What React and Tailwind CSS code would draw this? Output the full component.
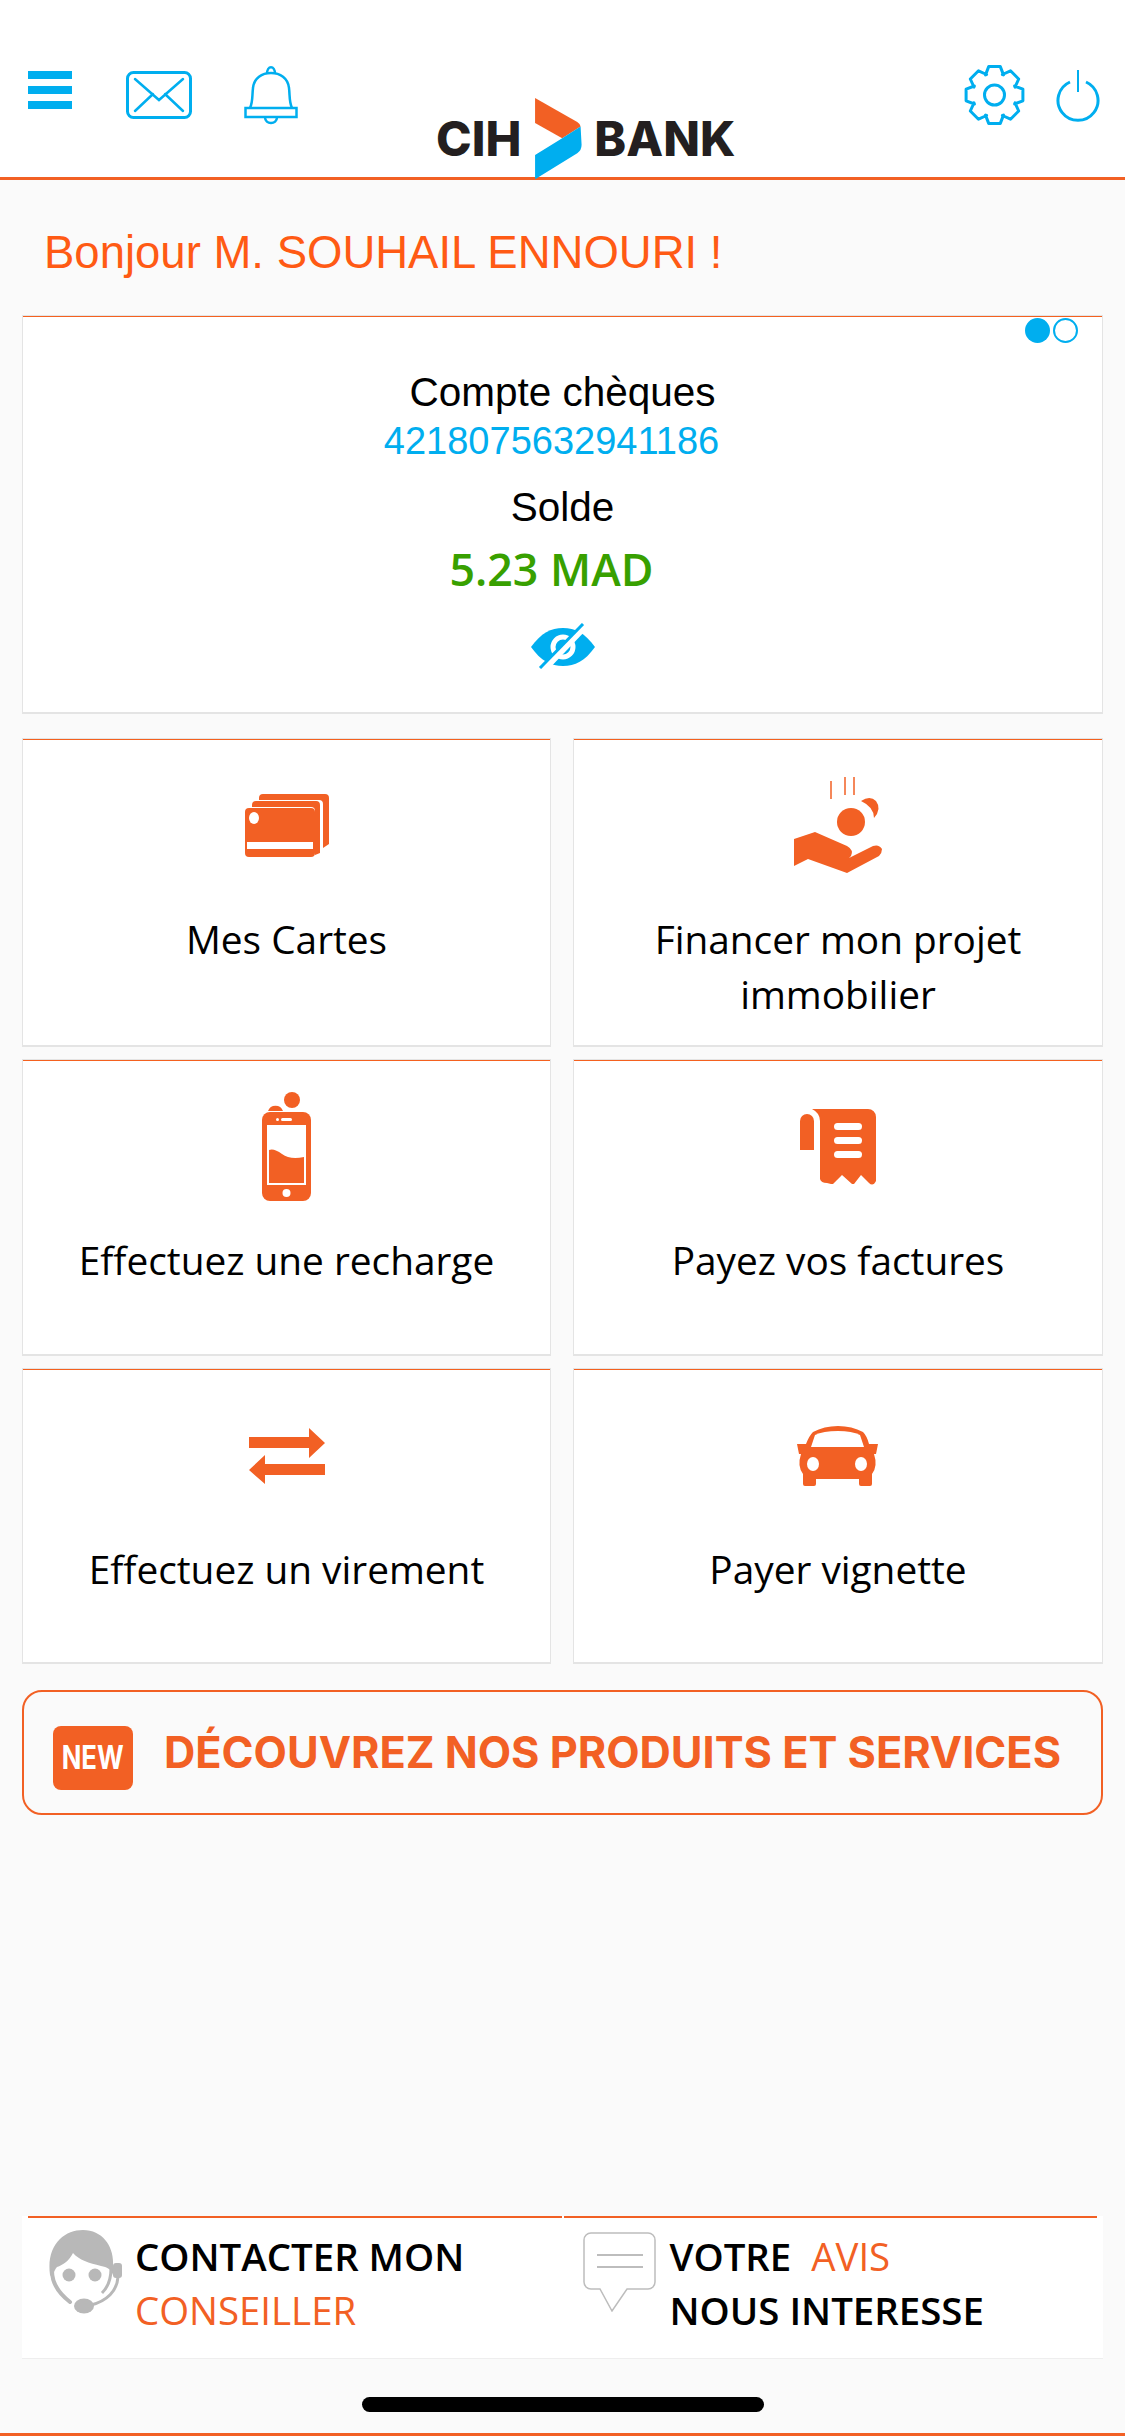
import React from "react";

const ORANGE = "#f26024";
const BLUE = "#00aeef";

// 8 teeth gear outline
const gearPath = () => {
  const pts = [];
  for (let i = 0; i < 8; i++) {
    const a = (i * Math.PI) / 4 - Math.PI / 2;
    const p = (r, d) => [
      30.5 + r * Math.cos(a + d),
      30 + r * Math.sin(a + d),
    ];
    pts.push(p(22, -0.42), p(29, -0.2), p(29, 0.2), p(22, 0.42));
  }
  return "M" + pts.map((p) => p[0].toFixed(1) + " " + p[1].toFixed(1)).join("L") + "Z";
};

const Menu = () => (
  <div className="flex flex-col gap-[7px] w-[44px] mt-[6px]">
    <div className="h-[8px] bg-[#00aeef]" />
    <div className="h-[8px] bg-[#00aeef]" />
    <div className="h-[8px] bg-[#00aeef]" />
  </div>
);

const Mail = () => (
  <svg width="66" height="48" viewBox="0 0 66 48" fill="none" stroke={BLUE} strokeWidth="3" className="mt-[6px]">
    <rect x="1.5" y="1.5" width="63" height="45" rx="6" />
    <path d="M9 8l24 21 24-21M9 40l18-17M57 40L39 23" strokeWidth="2.5" strokeLinecap="round" />
  </svg>
);

const Bell = () => (
  <svg width="54" height="60" viewBox="0 0 54 60" fill="none" stroke={BLUE} strokeWidth="2.5">
    <path d="M23 9c0-9 8-9 8 0" />
    <path d="M6 43c3-6 2-12 3-20 1-10 9-15 18-15s17 5 18 15c1 8 0 14 3 20" />
    <rect x="1.5" y="43" width="51" height="9" />
    <path d="M21 52c0 8 12 8 12 0" />
  </svg>
);

const Gear = () => (
  <svg width="61" height="60" viewBox="0 0 61 60" fill="none" stroke={BLUE} strokeWidth="3" strokeLinejoin="round">
    <path d={gearPath()} />
    <circle cx="30.5" cy="30" r="10" />
  </svg>
);

const Power = () => (
  <svg width="44" height="54" viewBox="0 0 44 54" fill="none" stroke={BLUE} strokeWidth="3">
    <path d="M14 13a20 20 0 1 0 16 0" />
    <path d="M22 1v22" strokeWidth="2" />
  </svg>
);

const Chevron = () => (
  <svg width="47" height="82" viewBox="404 55 140 245" className="ml-[14px] mr-[12px]">
    <path d="M404 55L530 127Q539 133 540 140L485 175L404 130Z" fill={ORANGE} />
    <path d="M540 140L543 195Q543 212 530 220L404 298V225L485 175Z" fill={BLUE} />
  </svg>
);

const EyeOff = () => (
  <svg width="64" height="46" viewBox="0 0 64 46">
    <path d="M0 24C10 10 20 5 32 5s22 5 32 19C54 38 44 43 32 43S10 38 0 24Z" fill={BLUE} />
    <circle cx="32" cy="24" r="10" fill="none" stroke="#fff" strokeWidth="5" />
    <path d="M13 46L53 4" stroke="#fff" strokeWidth="7" />
    <path d="M9 45L52 1" stroke={BLUE} strokeWidth="3" />
  </svg>
);

const CardsIcon = () => (
  <svg width="84" height="63" viewBox="0 0 84 63" fill={ORANGE} stroke="none">
    <path d="M14 4a4 4 0 0 1 4-4h62a4 4 0 0 1 4 4v46l-6 4V10a4 4 0 0 0-4-4H14Z" />
    <path d="M7 11a4 4 0 0 1 4-4h60a4 4 0 0 1 4 4v48l-5 2V17a4 4 0 0 0-4-4H7Z" />
    <rect x="0" y="14" width="70" height="49" rx="4" />
    <ellipse cx="9" cy="24" rx="5" ry="6" fill="#fff" />
    <rect x="2" y="48" width="66" height="7" fill="#fff" />
  </svg>
);

const HandIcon = () => (
  <svg width="88" height="97" viewBox="0 0 88 97" fill={ORANGE}>
    <path d="M37 4v18M51 0v18M60 0v18" stroke={ORANGE} strokeWidth="1.5" />
    <circle cx="57" cy="45" r="14" />
    <path d="M67 24Q76 18 82 24Q88 32 80 41Q80 30 67 24Z" />
    <path d="M0 62L21 55L53 69Q60 73 57 79Q56 80 55 81L79 69Q85 67 88 72Q88 76 85 79L53 96L14 82L0 89Z" />
  </svg>
);

const PhoneIcon = () => (
  <svg width="49" height="109" viewBox="0 0 49 109" fill={ORANGE}>
    <circle cx="30" cy="8" r="8" />
    <path d="M6 19a8 8 0 0 1 15 0Z" />
    <rect x="0" y="20" width="49" height="89" rx="8" />
    <rect x="5" y="33" width="39" height="60" fill="#fff" />
    <path d="M7 58Q12 56 20 62T42 65V91H7Z" />
    <circle cx="24.5" cy="101" r="4" fill="#fff" />
    <rect x="19" y="26" width="11" height="3" rx="1.5" fill="#fff" />
    <rect x="14" y="26" width="3" height="3" rx="1.5" fill="#fff" />
  </svg>
);

const ReceiptIcon = () => (
  <svg width="76" height="76" viewBox="0 0 76 76" fill={ORANGE}>
    <path d="M0 12a7 7 0 0 1 14 0v29H0Z" />
    <path d="M12 0H68a8 8 0 0 1 8 8V72q-3 6-7 2L61 66 54 75h-2L42 66 33 75h-2L27 74Q21 74 20 70V12Q20 4 12 0Z" />
    <rect x="34" y="14" width="28" height="7" rx="3.5" fill="#fff" />
    <rect x="34" y="28" width="28" height="7" rx="3.5" fill="#fff" />
    <rect x="34" y="42" width="28" height="7" rx="3.5" fill="#fff" />
  </svg>
);

const TransferIcon = () => (
  <svg width="76" height="56" viewBox="0 0 76 56" fill={ORANGE}>
    <path d="M0 9H60V0L76 15 60 30V20H0Z" />
    <path d="M76 36H16V27L0 42 16 56V47H76Z" />
  </svg>
);

const CarIcon = () => (
  <svg width="84" height="60" viewBox="0 0 84 60" fill={ORANGE}>
    <path d="M10 18H1l2 10H5Q1 40 7 48V58q0 2 2 2h9q2 0 2-2V53H63V58q0 2 2 2h9q2 0 2-2V48Q82 40 78 28h2l2-10H73Q71 10 67 6 56 0 42 0 28 0 17 6 13 10 10 18Z" />
    <path d="M15 21H68L64 9Q56 5 42 5 27 5 19 9Z" fill="#fff" />
    <ellipse cx="17" cy="38" rx="6" ry="7" fill="#fff" />
    <ellipse cx="65" cy="38" rx="6" ry="7" fill="#fff" />
  </svg>
);

const AgentIcon = () => (
  <svg width="75" height="84" viewBox="8 5 75 84" fill="#b8b8b8">
    <path d="M11 50C7 20 25 5 44 5C64 5 75 22 74 40V50C72 44 68 42 62 41C50 38 40 35 34 28C30 36 24 40 18 42C16 44 15 47 13 52Z" />
    <path d="M13 46C13 60 22 70 31 77" fill="none" stroke="#b8b8b8" strokeWidth="4" strokeLinecap="round" />
    <path d="M72 44C72 54 69 62 63 68" fill="none" stroke="#b8b8b8" strokeWidth="3" />
    <circle cx="30" cy="50" r="6.5" />
    <circle cx="56" cy="50" r="6.5" />
    <rect x="74" y="38" width="9" height="15" rx="3" />
    <path d="M79 52C78 66 68 76 52 80" fill="none" stroke="#b8b8b8" strokeWidth="3" />
    <ellipse cx="45" cy="81" rx="10" ry="7.5" />
  </svg>
);

const BubbleIcon = () => (
  <svg width="73" height="80" viewBox="0 0 73 80" fill="#fff" stroke="#bdbdbd" strokeWidth="1.5">
    <path d="M8 1H65a7 7 0 0 1 7 7V50a7 7 0 0 1-7 7H44L29 79 17 57H8a7 7 0 0 1-7-7V8a7 7 0 0 1 7-7Z" />
    <path d="M14 23H60M14 35H60" strokeWidth="2" />
  </svg>
);

const tiles = [
  { label: "Mes Cartes", icon: <CardsIcon /> },
  { label: "Financer mon projet immobilier", icon: <HandIcon /> },
  { label: "Effectuez une recharge", icon: <PhoneIcon /> },
  { label: "Payez vos factures", icon: <ReceiptIcon /> },
  { label: "Effectuez un virement", icon: <TransferIcon /> },
  { label: "Payer vignette", icon: <CarIcon /> },
];

export default function App() {
  return (
    <div className="w-[1125px] h-[2436px] bg-[#fafafa] flex flex-col overflow-hidden font-['Open_Sans',sans-serif]">
      <header className="h-[180px] shrink-0 bg-white border-b-[3px] border-[#f26024] flex pl-[28px] pr-[25px] pt-[65px] relative">
        <div className="flex items-start gap-[54px] w-[270px]">
          <Menu />
          <Mail />
          <div className="-ml-[2px]"><Bell /></div>
        </div>
        <div className="flex items-center ml-[138px] h-[82px] mt-[33px] -mb-[3px] z-10">
          <span className="font-['Inter',sans-serif] font-extrabold text-[48px] leading-none text-[#231f20]">CIH</span>
          <Chevron />
          <span className="font-['Inter',sans-serif] font-extrabold text-[48px] leading-none text-[#231f20]">BANK</span>
        </div>
        <div className="ml-auto flex items-start gap-[31px]">
          <Gear />
          <div className="mt-[4px]"><Power /></div>
        </div>
      </header>

      <div className="h-[135px] shrink-0 pl-[44px] pt-[48px] font-['Liberation_Sans',sans-serif] text-[45.5px] leading-[50px] text-[#ff5a14]">
        Bonjour M. SOUHAIL ENNOURI !
      </div>

      <section className="mx-[22px] h-[399px] shrink-0 bg-white border border-[#e4e4e4] border-b-2 shadow-[inset_0_1px_0_#f4611f] flex flex-col items-center relative">
        <div className="absolute right-[24px] top-[2px] flex gap-[3px]">
          <div className="w-[25px] h-[25px] rounded-full bg-[#00aeef]" />
          <div className="w-[25px] h-[25px] rounded-full border-2 border-[#00aeef]" />
        </div>
        <div className="mt-[52px] font-['Liberation_Sans',sans-serif] text-[40.5px] leading-[48px] text-black">Compte chèques</div>
        <div className="font-['Liberation_Sans',sans-serif] text-[38px] leading-[48px] text-[#00aeef] -ml-[22px] mt-[1px]">4218075632941186</div>
        <div className="font-['Liberation_Sans',sans-serif] text-[40.5px] leading-[48px] text-black mt-[18px]">Solde</div>
        <div className="text-[44.7px] leading-[56px] font-semibold text-[#38a000] mt-[10px] -ml-[22px]">5.23 MAD</div>
        <div className="mt-[26px]"><EyeOff /></div>
      </section>

      <div className="mx-[22px] mt-[24px] grid grid-cols-[529px_530px] gap-x-[22px] gap-y-[12px] grid-rows-[309px_297px_296px] shrink-0">
        {tiles.map((t) => (
          <div key={t.label} className="bg-white border border-[#e4e4e4] border-b-2 shadow-[inset_0_1px_0_#f4611f] flex flex-col items-center">
            <div className="h-[173px] shrink-0 flex items-center justify-center">{t.icon}</div>
            <div className="text-[38.8px] leading-[55px] text-black text-center px-[40px]">{t.label}</div>
          </div>
        ))}
      </div>

      <button className="mx-[22px] mt-[26px] h-[125px] shrink-0 border-2 border-[#f26024] rounded-[20px] flex items-center pl-[29px] gap-[31px]">
        <span className="w-[80px] h-[64px] mt-[10px] rounded-[8px] bg-[#f26024] text-white font-['Inter',sans-serif] font-bold text-[33px] flex items-center justify-center">
          <span className="inline-block scale-x-[0.78]">NEW</span>
        </span>
        <span className="font-['Inter',sans-serif] font-bold text-[43.3px] text-[#f26024] whitespace-nowrap">DÉCOUVREZ NOS PRODUITS ET SERVICES</span>
      </button>

      <div className="flex-1" />

      <footer className="mx-[22px] h-[143px] shrink-0 bg-white border-b border-[#eeeeee] flex px-[6px] gap-[2px] relative">
        <div className="flex-1 border-t-2 border-[#f26024] flex pl-[19px] pt-[12px]">
          <AgentIcon />
          <div className="ml-[13px] -mt-[1px] text-[38.4px] leading-[54px] font-semibold text-black">
            CONTACTER MON
            <br />
            <span className="font-normal text-[#f26024]">CONSEILLER</span>
          </div>
        </div>
        <div className="flex-1 border-t-2 border-[#f26024] flex pl-[19px] pt-[14px]">
          <BubbleIcon />
          <div className="ml-[14px] -mt-[3px] text-[38.4px] leading-[54px] font-semibold text-black whitespace-pre">
            VOTRE  <span className="font-normal text-[#f26024]">AVIS</span>
            <br />
            NOUS INTERESSE
          </div>
        </div>
      </footer>

      <div className="h-[77px] shrink-0 flex justify-center pt-[38px] border-b-[3px] border-[#f26024]">
        <div className="w-[402px] h-[15px] rounded-full bg-black" />
      </div>
    </div>
  );
}
